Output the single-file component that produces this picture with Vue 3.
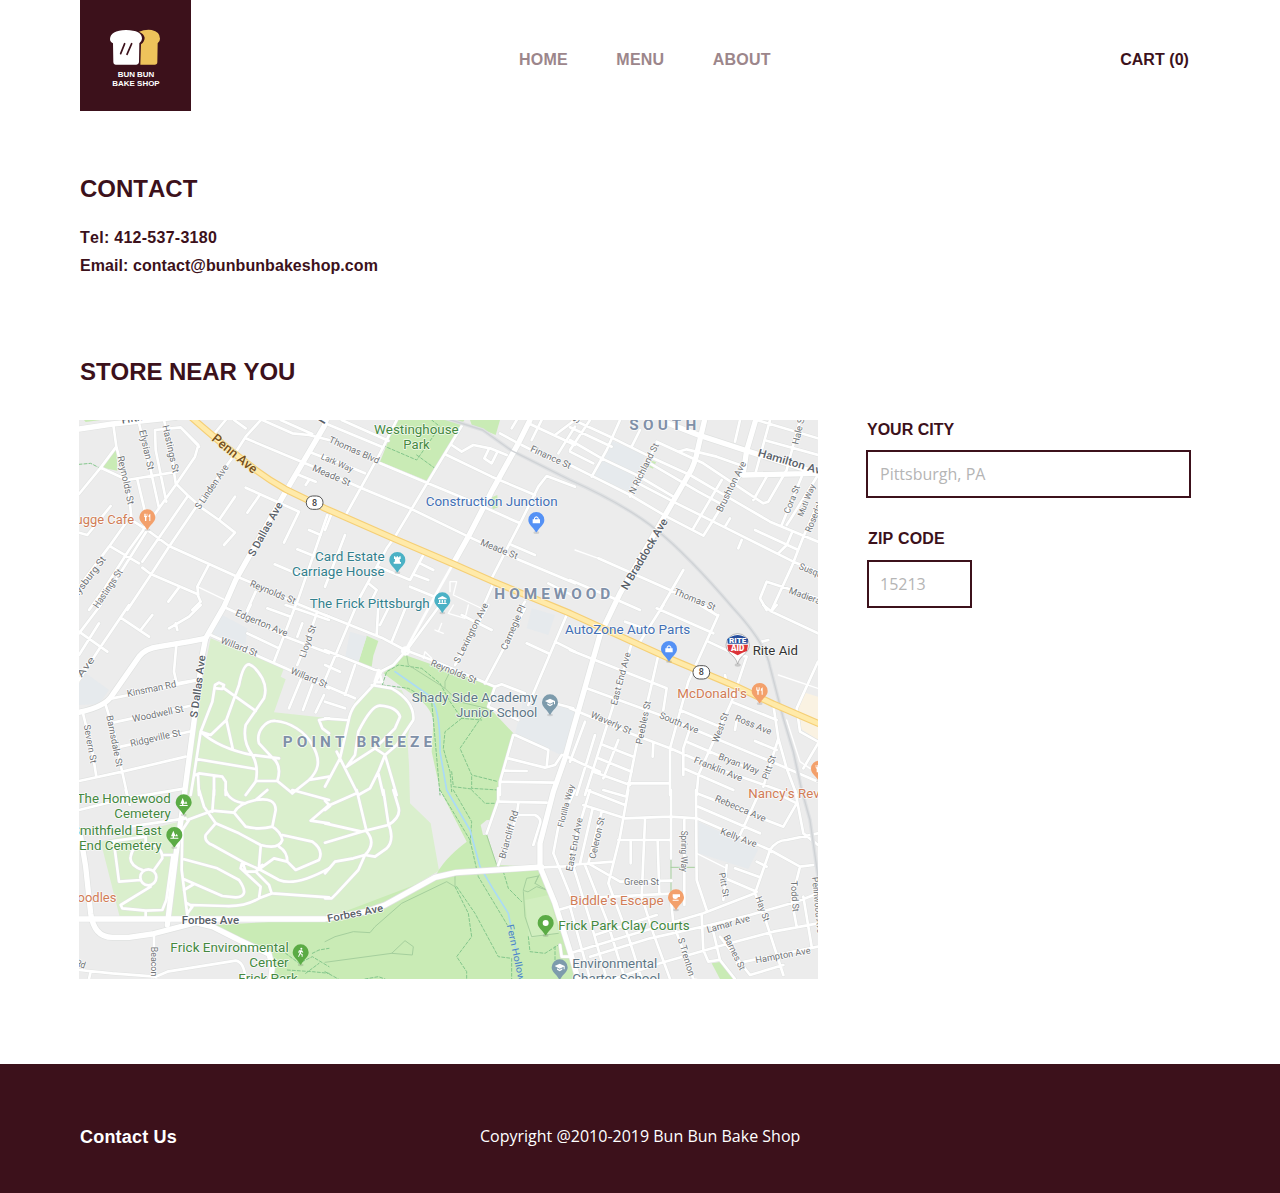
<script setup>
const nav = ['HOME', 'MENU', 'ABOUT']

// Map geometry is kept per tile; coordinates are local to the tile origin.
const tiles = [
  {
    x: 0, y: 0,
    park: 'M112 85 L115 152 L70 143Z M15 0 H65 L20 6Z',
    roads: 'M103 15 L112 80 L65 143 L0 222 M112 80 L150 225 L158 300 M65 143 L145 180 L295 155 M180 10 L215 150 L240 265 M175 178 L198 275 M255 0 L275 90 L290 190 L325 225 L370 265 L420 300 L468 338 L435 375 M262 245 L230 90 L228 30 L305 22 L358 75 L348 110 L290 195 L150 390 L80 500 L30 570 M305 22 L360 80 M440 0 L405 42 M465 0 L500 25 M550 -5 L500 50 L455 120 L345 270 L270 380 L215 465 L145 570 M325 230 L190 425 M468 230 L420 300 M165 305 L205 330 L270 378 L390 432 L475 470 L545 500 L640 545 L750 590 M205 330 L95 505 M95 380 L180 430 M95 258 L25 345 L0 338 M140 310 L90 380 L0 500 M190 443 L215 462 L355 522 L365 545 L340 570 M388 437 L355 500 L358 525 M300 502 L268 545 M500 55 L655 120 L750 160 M550 0 L640 40 L690 45 L750 60 M605 0 L700 42 M690 95 L740 115 M660 165 L710 185 M690 180 L680 195 M500 203 L660 275 L615 368 M542 225 L505 278 M745 285 L655 545 M690 330 L725 345 M655 388 L705 408 M587 433 L670 468 M530 515 L505 570',
    thin: 'M355 500 L435 538',
    trail: 'M0 133 L35 130 L60 143',
    streets: [
      ['Fifth Ave', 130, 11, 250, -10, 30, 1], ['Elysian St', 180, 32, 207, 152, 29], ['Hastings St', 250, 18, 282, 160, 29],
      ['Reynolds St', 115, 110, 147, 255, 29], ['S Linden Ave', 362, 270, 450, 142, 29], ['Gettysburg St', -32, 568, 82, 418, 29],
      ['Hastings St', 57, 566, 132, 456, 29], ['S Dallas Ave', 525, 412, 612, 254, 32, 1], ['Reynolds St', 511, 498, 645, 553, 29],
      ['Penn Ave', 396, 60, 522, 162, 39, 2], ['N', 735, 14, 750, -10, 32, 1],
    ],
  },
  {
    x: 738, y: 0,
    park: 'M215 0 H418 L385 60 L305 182 L165 125Z M435 0 H525 L512 45 L440 14Z M497 233 L517 225 L519 262 L503 268Z',
    roads: 'M0 10 L170 80 M50 0 L190 62 M215 0 L165 100 L65 280 M415 10 L330 150 L210 350 L185 385 L100 540 M165 130 L305 188 L430 240 L585 310 M365 105 L500 170 L630 225 M750 200 L665 168 L640 200 L585 310 L500 475 M0 155 L110 205 L255 265 L430 350 L560 410 L750 490 M0 110 L120 160 M380 75 L410 95 L445 75 L495 85 L545 105 M490 90 L478 115 L500 130 L515 100 M560 375 L630 405 M505 490 L470 570 M20 280 L0 330 M295 405 L255 480 L160 440 M285 430 L325 450 M270 465 L310 480 M255 500 L340 535 M130 490 L155 510 L140 540 M60 345 L0 500 M610 10 L750 75 M590 75 L700 130 M650 0 L620 60 M560 25 L575 0 M525 40 L580 70 M670 490 L750 530 M600 545 L585 570 M690 45 L750 0 M700 100 L750 20',
    thin: 'M375 515 V485 H395 L385 525 L480 570',
    trail: 'M320 0 L345 20 L275 120 L170 75 M275 105 L330 145',
    streets: [
      ['Thomas Blvd', 10, 66, 158, 132, 28], ['Lark Way', -14, 116, 80, 157, 26], ['Meade St', -40, 151, 72, 199, 28],
      ['Finance St', 614, 93, 733, 147, 28], ['Meade St', 464, 374, 574, 418, 28],
    ],
  },
  {
    x: 1473, y: 0,
    park: 'M245 122 L258 126 L249 146 L237 141Z',
    campus: 'M125 62 L225 105 L180 215 L70 170Z',
    roads: 'M0 135 L70 170 L180 225 L290 290 L400 347 L430 300 L515 160 M150 0 L110 90 L65 170 M0 -5 L130 55 L240 110 L360 165 L480 235 L600 305 L744 365 M0 60 L95 115 L200 165 L310 230 M0 95 L70 130 M60 0 L0 90 M210 30 L185 80 M0 22 L125 80 M260 65 L400 130 L580 250 L595 245 L650 150 L690 0 M325 95 L350 88 L440 110 L510 135 M180 230 L260 70 M240 130 L385 215 L450 250 M205 190 L320 250 L460 320 L670 425 L744 455 M455 180 L370 325 M480 295 L465 320 M515 360 L505 385 M555 165 L600 0 M590 170 L550 240 M510 0 L495 65 M560 0 L744 55 M590 62 L744 105 M695 170 L635 315 M744 165 L660 300 L650 315 M744 250 L700 350 L665 440 L605 570 M555 330 L680 388 M665 340 L650 375 L625 400 M85 415 L300 510 L430 570 M340 450 L270 570 M0 480 L130 535 L210 570 M590 570 L570 535 L590 485 L744 535',
    thin: 'M15 390 L85 415',
    streets: [
      ['N Richland St', 193, 224, 267, 75, 28], ['Brushton Ave', 455, 278, 529, 130, 29], ['Hale St', 685, 75, 706, -12, 28],
      ['Hamilton Ave', 562, 108, 768, 168, 33, 1], ['Cora St', 658, 283, 690, 200, 27], ['Muti Way', 698, 292, 736, 197, 25],
      ['Rosedale St', 722, 339, 775, 210, 28], ['N Braddock Ave', 171, 512, 294, 304, 33, 1], ['Susquehanna St', 685, 446, 860, 520, 28],
      ['Madiera St', 655, 519, 778, 564, 28], ['Thomas St', 310, 522, 432, 572, 28], ['St', 22, 12, 38, -15, 27],
    ],
  },
  {
    x: 0, y: 555,
    campus: 'M0 190 L90 255 L60 298 L0 300Z M420 25 L505 70 L500 120 L400 90Z',
    roads: 'M150 0 L65 125 L0 225 M65 0 L0 85 M60 55 L0 150 M0 80 L85 140 M125 38 L210 95 M220 30 L185 75 M365 0 L330 35 L270 70 M290 55 L295 75 M440 8 L500 35 L620 95 L750 145 M515 0 L500 30 M565 10 L635 35 M650 0 L585 170 M395 90 L530 150 L620 190 L750 250 M505 85 L600 130 M715 20 L680 120 L655 180 M670 55 L655 95 M665 225 L630 310 M700 240 L672 315 M735 270 L710 322 M620 0 L750 45 M292 120 L285 200 L293 235 L350 225 M100 280 L150 270 L360 225 M105 352 L345 300 M125 425 L340 378 M0 528 L130 500 L320 455 M80 300 L105 380 L125 480 L145 570 M12 325 L40 440 L52 515 M365 380 L400 290 L408 240 L420 233 L435 240 L430 252 L412 250 M435 250 L530 318 M365 380 Q420 430 520 450 L600 460 M365 380 L345 510 L335 570 M365 380 L395 390 L442 345 L462 435 M442 345 L480 240 Q492 178 510 178 Q530 185 550 220 Q565 250 555 280 L500 360 Q490 410 520 450 Q540 485 530 530 L500 570 M352 462 L530 492 M350 510 L360 505 L430 515 L440 530 V570 M405 515 V570 M357 510 L360 570 M580 458 L540 415 C530 380 560 345 590 348 C630 350 680 380 700 420 C730 470 715 500 690 525 L640 565 M580 458 Q610 480 595 528 H530 M595 528 L640 565 M690 525 L750 515 M750 340 L720 345 L730 370 L750 385',
    streets: [
      ['Edgerton Ave', 467, 31, 621, 95, 29], ['Willard St', 423, 113, 531, 155, 28], ['Willard St', 633, 205, 740, 249, 28],
      ['Lloyd St', 678, 160, 712, 64, 28], ['S Dallas Ave', 355, 340, 380, 152, 32, 1], ['Kinsman Rd', 146, 276, 293, 246, 29],
      ['Woodwell St', 162, 352, 315, 320, 29], ['Ridgeville St', 156, 425, 307, 392, 29], ['Barnsdale St', 82, 333, 113, 487, 28],
      ['Severn St', 14, 361, 35, 476, 28], ['Linden Ave', -72, 325, 48, 164, 28],
    ],
  },
  {
    x: 738, y: 555,
    park: 'M125 92 L160 108 L145 152 L140 185 L100 175Z',
    campus: 'M75 80 L125 95 L100 172 L60 158Z M600 265 L755 310 L712 452 L570 385Z M620 10 L690 30 L670 90 L605 70Z',
    roads: 'M0 30 L75 60 L170 98 L240 135 L320 165 L510 245 M240 140 L205 180 L170 198 L150 195 L0 135 M170 198 L150 235 L90 300 Q75 320 70 350 L45 460 L0 545 M140 240 L200 250 Q270 290 265 345 L215 420 L180 450 M65 485 L90 450 L100 380 Q140 300 165 302 Q215 305 225 335 L210 370 L150 430 L65 485 M150 430 L180 450 L215 570 M35 440 L100 570 M160 505 L175 570 M180 450 L160 500 L135 550 L100 570 M0 340 L65 345 M345 0 L242 140 M245 0 L200 110 M160 0 L155 90 M195 0 L165 60 M95 0 L0 225 M90 180 L60 270 M0 180 L45 200 M10 245 L90 280 M0 290 L60 310 M600 10 L480 235 M490 0 L390 180 M410 30 L500 75 M725 30 L610 300 M605 115 L670 145 M690 110 L750 140 M510 245 L530 238 L600 265 M510 245 L490 305 L580 345 M565 390 L525 530 V570 M570 390 L670 435 L665 485 M550 460 L660 488 L690 480 L710 450 M540 497 L605 498 M525 530 L690 533 M715 450 L750 465 M700 298 L745 310',
    thin: 'M385 0 L370 25 L420 40 L430 0 M350 55 L340 80 L330 75 M355 85 L330 75 M320 160 L300 140 L295 160',
    trail: 'M172 240 L185 200 L220 180 L290 190 L345 235 L375 290 L410 340 L470 345 M172 240 L250 250 L320 290 L330 400 L345 570 M410 340 L360 380 L355 430 L375 500 L380 560 M470 335 L405 430 L440 510 L520 530 M440 515 V550 L520 555 M380 500 L385 545 L440 552',
    path: 'M245 150 L250 180 L345 240 L360 250 L360 230 L375 200 M360 250 L400 290 L485 310',
    streets: [
      ['Reynolds St', 315, 181, 450, 236, 28], ['S Lexington Ave', 402, 176, 490, 0, 28], ['Carnegie Pl', 544, 137, 602, 5, 28],
    ],
  },
  {
    x: 1473, y: 555,
    food: 'M700 262 L744 275 V405 L690 370 L683 305Z',
    roads: 'M0 135 L75 165 L290 250 M50 250 L270 330 L400 385 L640 485 L744 530 M0 310 L180 385 L300 430 L440 490 L640 560 M185 115 L130 300 L45 570 M265 150 L240 260 L200 420 L170 570 M445 30 L355 230 L300 430 V570 M210 110 L280 0 M440 30 L390 0 M260 10 L430 85 M165 50 L250 80 M415 110 L500 150 L530 155 L485 290 L430 410 L385 510 L380 570 M290 250 L280 315 M485 290 L620 345 M330 315 L450 365 M360 370 L340 430 V510 M350 410 L560 500 M340 490 L490 555 M500 345 L495 375 M610 300 L625 400 L580 545 M625 400 L650 490 L680 570 M555 408 L620 435 M45 350 L0 470 M75 390 L20 570 M100 420 L190 455 M85 460 L185 500 M70 500 L180 540 M145 405 L100 520 M0 460 L90 500 M175 535 H300 M250 415 L248 455 M580 0 L605 20 L744 85 M605 18 L620 0 M465 210 L470 235 M575 110 L595 105 M744 170 L680 310 L690 380 L744 410 M744 415 L700 490',
    thin: 'M625 210 L744 250 M650 345 L690 470 L720 490',
    streets: [
      ['East End Ave', 140, 302, 182, 145, 28], ['Peebles St', 216, 419, 243, 290, 28], ['Waverly St', 60, 336, 179, 388, 28],
      ['South Ave', 266, 338, 381, 386, 28], ['West St', 444, 415, 476, 327, 28], ['Ross Ave', 493, 346, 600, 390, 28],
      ['Bryan Way', 443, 462, 563, 508, 28], ['Franklin Ave', 370, 472, 513, 530, 28], ['Pitt St', 593, 526, 618, 455, 28],
    ],
  },
  {
    x: 0, y: 1110,
    roads: 'M0 60 L140 25 L320 -5 M140 0 L152 45 M152 110 L320 85 M90 155 L200 140 V160 M105 160 L120 275 L185 270 M184 262 A24 24 0 1 0 232 262 A24 24 0 1 0 184 262 M190 240 Q150 225 155 200 Q160 165 200 160 Q250 165 250 205 L225 240 M250 195 L285 195 M215 290 L125 345 L130 355 L200 362 L250 360 L262 330 L280 200 M200 362 V385 M330 90 L310 120 L308 240 L325 375 M315 208 L415 235 L480 270 Q515 320 470 322 L430 318 L315 268 M345 282 L315 300 M325 340 L340 350 L325 370 M335 345 L440 348 Q500 350 540 325 L580 310 L750 322 M325 90 L400 62 L465 68 M405 0 L400 65 M360 0 L375 50 L410 100 L380 135 Q375 155 400 165 L490 215 L545 240 L600 270 Q650 290 750 235 M410 100 L480 130 L545 165 Q600 180 610 150 Q605 125 580 110 Q540 120 500 110 L465 68 Q480 40 530 30 Q590 20 590 60 L580 110 M440 0 Q450 35 500 40 M530 30 L565 0 M610 135 L700 155 Q735 180 720 210 L650 240 L625 215 L585 205 L530 245 M545 170 L540 230 M600 170 Q625 185 625 215 M490 215 L485 235 L545 290 L540 325 M500 245 H530 L550 225 M530 245 L570 285 L578 310 M490 215 L500 245 M640 0 L750 30 M750 45 L695 92 L750 100 M225 435 V560 M0 540 L100 550 L230 560 L265 545 L470 512 Q495 515 500 567 M35 545 L30 567',
    trail: 'M620 490 L660 520 L700 500 L750 530 M625 540 L700 545 L750 550 M700 490 L720 480 L750 475 M680 550 L720 520',
    streets: [
      ['Forbes Ave', 308, 402, 480, 402, 32, 1], ['Beacon St', 217, 470, 217, 590, 29], ['Reed Rd', -72, 505, 16, 536, 28],
    ],
  },
  {
    x: 738, y: 1110,
    roads: 'M95 0 L125 125 Q155 160 120 195 L85 205 L30 215 L0 250 M0 100 L110 125 L190 105 Q230 80 220 50 L205 0 M110 125 L0 158 M175 0 L190 100 Q210 150 185 175 L150 200 L120 195 L100 240 L35 310 L20 325 H0 M15 45 L95 10 M0 32 L15 48 L0 60 M520 -5 V30 L485 130 M525 35 L665 38 M580 40 L575 75 L630 75 Q650 85 645 100 L625 165 M575 80 L520 225 M650 232 L750 228 M750 0 L700 110 L685 190 L750 350 M700 360 L750 345 M705 465 L710 500 L740 500',
    trail: 'M345 0 L435 150 L460 260 L550 410 M385 0 L440 95 L435 160 M390 290 L430 370 L440 440 L395 500 L425 545 V567 M395 290 L450 370 L520 500 L560 505 V567 M535 245 L550 295 L590 335 M610 440 L615 485 L660 490 L700 465 M440 0 L480 40 L520 40 M690 470 V520 M120 567 L160 560 L180 567 M0 545 L40 567',
    path: 'M0 455 L30 440 L85 425 L135 428 L150 410 L230 340 L365 275 L390 290 V248 M0 517 L200 490 L240 452 L265 470 L262 495 L200 490 M485 135 L515 225 M595 305 L600 380 L620 440 L700 430 M595 300 L605 265 L640 258 L630 280 L665 300 L635 290 L610 305Z M630 280 L645 250',
    streets: [
      ['Forbes Ave', 9, 397, 176, 364, 32, 1], ['Briarcliff Rd', 540, 208, 580, 65, 28], ['Fern Hollow Creek', 545, 405, 600, 665, 29, 3],
      ['Flotilla Way', 714, 113, 748, -14, 25], ['East End Ave', 742, 245, 773, 85, 28],
    ],
  },
  {
    x: 1473, y: 1110,
    park: 'M425 520 L455 515 L495 567 H450Z',
    campus: 'M385 95 L565 178 L535 237 L385 190Z',
    roads: 'M60 0 L0 200 M40 45 L165 85 L300 80 L380 85 M50 0 L165 45 M100 0 L170 20 M175 0 L150 140 L115 280 L130 320 M68 55 L30 220 M0 225 L130 215 M95 65 L55 220 L150 275 L305 272 M145 150 H300 M182 155 V220 M225 90 L215 320 L250 430 L300 567 M263 155 L268 310 M303 0 V205 M343 90 V345 M80 322 L320 310 M45 225 L110 390 L165 567 M10 230 L60 390 L110 567 M0 350 L60 567 M130 320 L175 440 L215 567 M0 490 L180 435 L400 370 L555 310 M75 435 L260 375 M60 500 L240 445 L420 405 L540 375 L680 335 L744 310 M130 567 L270 520 L460 465 L610 425 L744 400 M303 330 L310 400 L370 567 M395 375 L400 480 L415 515 L445 510 M378 0 L380 270 L410 360 M425 405 L450 510 L495 567 M450 440 L540 555 L640 525 M555 310 L590 400 L640 555 M500 520 L744 470 M690 230 L665 330 L680 410 M700 320 L725 470 M380 85 L600 180 L690 230 L730 225 M555 310 L600 180 Q620 150 650 150 L744 130 M380 10 L640 110 L680 40 L640 20 M385 50 L570 130 M560 25 L510 135 M470 225 L460 330 M465 265 L560 305 M495 235 L570 262 M560 215 L590 230 M675 0 L700 130 L744 165',
    thin: 'M380 190 L470 235',
    path: 'M303 205 V320 M303 232 H378',
    streets: [
      ['Celeron St', 76, 208, 104, 84, 28], ['Spring Way', 334, 122, 334, 246, 26], ['Green St', 162, 285, 267, 285, 28],
      ['Rebecca Ave', 433, 32, 583, 96, 28], ['Kelly Ave', 449, 131, 556, 172, 28], ['Pitt St', 446, 250, 460, 322, 27],
      ['Lamar Ave', 413, 429, 542, 393, 28], ['Barnes St', 460, 440, 510, 543, 28], ['Hay St', 556, 323, 582, 396, 28],
      ['Todd St', 662, 273, 668, 366, 28], ['Pennwood Ave', 726, 262, 742, 430, 27], ['Hampton Ave', 558, 520, 723, 490, 28],
      ['S Trenton Ave', 323, 447, 372, 610, 28],
    ],
  },
]

const highways = [
  'M745 -10 L735 20 L620 215 L600 250 L470 480 L435 560 L380 655 L370 705 L345 905 L325 1055 L310 1170 L290 1310 L265 1515',
  'M380 655 L330 665 L240 680 Q200 685 180 710 L100 825 Q80 860 0 877',
  'M5 1250 L20 1340 L35 1480 Q45 1552 100 1552 L150 1552 L220 1542 L350 1508 L400 1520 L480 1560 L570 1602 L580 1640 L575 1677',
  'M0 1497 H738 L860 1475 L918 1455 L1068 1372 L1130 1358 L1388 1341',
  'M1878 -5 L1858 80 Q1848 135 1828 165 L1753 295 L1623 520 L1563 645 L1523 785 L1483 925 L1458 1015 L1423 1115 L1383 1270 V1340 L1428 1450 L1478 1610 L1498 1680',
  'M1353 0 L1318 70 L1243 205 L1168 350 L1123 430',
  'M1763 8 L1858 45 L2003 92 L2073 115 L2217 160 M2030 0 L2003 92 L1992 165 L2217 160',
  'M0 27 L100 12 L290 -8',
]

const penn = 'M335 -10 Q430 75 530 150 Q570 180 620 208 L738 265 L943 355 L1123 432 L1243 485 L1473 580 L1770 715 L1973 800 L2083 852 L2217 910'
const rail = 'M1078 -12 L1211 30 L1298 92 L1473 180 Q1640 255 1733 330 T1963 565 Q2060 670 2073 740 L2113 895 L2143 995 L2168 1110 L2193 1200 L2217 1370'

const districts = [
  ['SOUTH', 1651, 29, 1852], ['HOMEWOOD', 1246, 537, 1594], ['POINT BREEZE', 611, 981, 1059],
]

const places = [
  ['Mugge Cafe', -44, 313, 165, 'food'], ['Westinghouse', 885, 41, 1139, 'green'], ['Park', 973, 87, 1052, 'green'],
  ['Construction Junction', 1040, 257, 1436, 'shop'], ['Card Estate', 708, 422, 917, 'museum'], ['Carriage House', 639, 467, 917, 'museum'],
  ['The Frick Pittsburgh', 692, 563, 1052, 'museum'], ['AutoZone Auto Parts', 1458, 643, 1834, 'shop'], ['Rite Aid', 2021, 705, 2157, 'plain'],
  ["McDonald's", 1795, 835, 2004, 'food'], ['Shady Side Academy', 998, 846, 1375, 'school'], ['Junior School', 1131, 891, 1375, 'school'],
  ["Nancy's Revival", 2008, 1134, 2282, 'food'], ['The Homewood', -7, 1148, 275, 'green'], ['Cemetery', 106, 1193, 275, 'green'],
  ['Smithfield East', -22, 1246, 248, 'green'], ['End Cemetery', 0, 1291, 248, 'green'], ['Noodles', -32, 1446, 112, 'food'],
  ['Frick Environmental', 274, 1596, 629, 'green'], ['Center', 511, 1641, 629, 'green'], ['Frick Park', 478, 1690, 656, 'green'],
  ["Biddle's Escape", 1473, 1454, 1754, 'food'], ['Frick Park Clay Courts', 1438, 1530, 1832, 'green'],
  ['Environmental', 1480, 1643, 1735, 'school'], ['Charter School', 1480, 1688, 1744, 'school'],
]

const pins = [
  [205, 292, '#f3a06b', 'fork'], [1372, 300, '#5491f5', 'bag'], [955, 420, '#4bb1c5', 'tower'], [1090, 541, '#4bb1c5', 'museum'],
  [1770, 687, '#5491f5', 'bag'], [2042, 813, '#f3a06b', 'fork'], [1413, 847, '#7d9bac', 'cap'], [2220, 1046, '#f3a06b', 'fork'],
  [314, 1147, '#5bab45', 'tree'], [286, 1245, '#5bab45', 'tree'], [1791, 1432, '#f3a06b', 'cup'], [1400, 1509, '#5bab45', 'dot'],
  [665, 1597, '#5bab45', 'hiker'], [1442, 1642, '#7d9bac', 'cap'],
]

const glyphs = {
  fork: 'M-10 -11 V-4 Q-10 0 -7 0 V11 H-3 V0 Q0 0 0 -4 V-11 H-2 V-4 H-4 V-11 H-6 V-4 H-8 V-11Z M9 -11 Q3 -9 3 -1 H6 V11 H9Z',
  bag: 'M-11 -2 H11 V10 H-11Z M-7 -2 V-6 Q0 -16 7 -6 V-2 H4 V-5 Q0 -10 -4 -5 V-2Z',
  tower: 'M-10 -11 H-6 V-8 H-2 V-11 H2 V-8 H6 V-11 H10 V-3 H7 L8 6 H11 V11 H-11 V6 H-8 L-7 -3 H-10Z',
  museum: 'M0 -13 L13 -6 V-3 H-13 V-6Z M-10 -1 H-6 V7 H-10Z M-2 -1 H2 V7 H-2Z M6 -1 H10 V7 H6Z M-13 8 H13 V11 H-13Z',
  cap: 'M0 -11 L15 -4 V6 H12 V-2 L0 4 L-15 -4Z M-8 3 L0 7 L8 3 V7 L0 12 L-8 7Z',
  tree: 'M-3 -13 L4 4 H-1 V8 H-5 V4 H-10Z M7 -4 L11 4 H3Z M-12 8 H12 V11 H-12Z',
  cup: 'M-10 -9 H12 V-1 H6 Q5 5 -2 5 Q-10 5 -10 -1Z M-10 7 H8 V10 H-10Z',
  dot: 'M-9 0 A9 9 0 1 0 9 0 A9 9 0 1 0 -9 0',
  hiker: 'M-1 -11 A3 3 0 1 0 5 -11 A3 3 0 1 0 -1 -11 M-5 -6 H4 L8 0 L6 1 L2 -2 L1 3 L6 6 V13 H3 V8 L-1 5 L-5 13 H-8 L-4 4 L-3 -3 L-6 1 H-8Z',
}

const kinds = ['street', 'avenue', 'penn', 'creek']

function place([, x1, y1, x2, y2]) {
  return `translate(${x1} ${y1}) rotate(${(Math.atan2(y2 - y1, x2 - x1) * 180) / Math.PI})`
}

function span([, x1, y1, x2, y2]) {
  return Math.hypot(x2 - x1, y2 - y1)
}
</script>

<template>
  <div class="page">
    <header class="header">
      <a class="logo">
        <svg viewBox="30 0 333 333" width="111" height="111">
          <path fill="#eec35b" d="M207 95 Q224 88 245 90 Q270 95 270 116 Q270 125 263 130 L262 186 Q262 194 254 194 H211 L213 133 Q224 124 224 113 Q222 101 207 95Z" />
          <path fill="#fff" d="M120 117 Q121 92 168 90 Q216 91 216 116 Q215 125 208 130 L207 187 Q206 194 199 194 H137 Q130 194 130 187 L129 130 Q120 126 120 117Z" />
          <path stroke="#3c111b" stroke-width="5" stroke-linecap="round" d="M164 131 L152 161 M185 131 L171 163" />
          <text x="143" y="231" textLength="110" lengthAdjust="spacingAndGlyphs">BUN BUN</text>
          <text x="127" y="258" textLength="142" lengthAdjust="spacingAndGlyphs">BAKE SHOP</text>
        </svg>
      </a>
      <nav class="nav">
        <a v-for="item in nav" :key="item">{{ item }}</a>
      </nav>
      <a class="cart">CART (0)</a>
    </header>

    <main class="main">
      <section class="contact">
        <h1>CONTACT</h1>
        <p class="tel">Tel: 412-537-3180</p>
        <p class="email">Email: contact@bunbunbakeshop.com</p>
      </section>

      <h1 class="near">STORE NEAR YOU</h1>
      <section class="stores">
        <svg class="map" viewBox="0 0 2217 1677" width="739" height="559">
          <rect width="2217" height="1677" fill="#ececec" />
          <path fill="#daefcd" d="M395 655 L615 745 L605 770 L620 778 L585 877 L738 893 L803 900 L828 845 L888 795 L968 810 L1003 885 L985 955 L990 1035 L993 1150 L1055 1210 L1080 1352 L918 1450 L750 1495 L122 1490 L65 1265 L300 1205 L345 905Z" />
          <path fill="#c9ebb5" d="M978 705 L1248 800 L1228 860 L1308 945 L1263 1085 V1140 L1223 1240 L1253 1335 L1388 1341 L1428 1450 L1498 1677 H580 L570 1602 L400 1515 L738 1497 L1068 1372 Q1090 1320 1163 1265 L1083 1110 L1058 995 L1063 905 Q1058 855 988 815 L913 760Z" />
          <path fill="#ececec" d="M1223 1200 L1205 1215 L1212 1245 L1225 1245 L1240 1200Z" />
          <path fill="#d1eebf" d="M1338 1440 L1410 1425 L1440 1540 L1350 1555Z" />
          <g v-for="(t, i) in tiles" :key="'a' + i" :transform="`translate(${t.x} ${t.y})`">
            <path :d="t.park" fill="#c9ebb5" />
            <path :d="t.campus" fill="#e6eaed" />
            <path :d="t.food" fill="#faf2e2" />
          </g>
          <g class="line">
            <g v-for="(t, i) in tiles" :key="'t' + i" :transform="`translate(${t.x} ${t.y})`">
              <path :d="t.trail" class="trail" />
              <path :d="t.path" class="path" />
            </g>
            <path class="stream" d="M948 755 L1048 825 Q1085 860 1083 995 L1103 1110 L1173 1230 L1203 1340 L1238 1400 L1288 1480 L1298 1530 L1328 1677" />
            <g v-for="(t, i) in tiles" :key="'c' + i" :transform="`translate(${t.x} ${t.y})`">
              <path :d="t.roads" class="casing" />
            </g>
            <path v-for="d in highways" :key="'hc' + d" :d="d" class="big-casing" />
            <g v-for="(t, i) in tiles" :key="'r' + i" :transform="`translate(${t.x} ${t.y})`">
              <path :d="t.roads" class="road" />
              <path :d="t.thin" class="thin" />
            </g>
            <path d="M1123 430 L1078 510 L983 685" class="road" />
            <path d="M899 750 l-12 36 h22z M970 693 a10 10 0 1 0 20 0 a10 10 0 1 0 -20 0" class="road" />
            <path :d="rail" class="rail-glow" />
            <path v-for="d in highways" :key="d" :d="d" class="big" />
            <path :d="rail" class="rail" />
            <path :d="penn" class="penn-casing" />
            <path :d="penn" class="penn-road" />
          </g>

          <g v-for="(t, i) in tiles" :key="'l' + i" :transform="`translate(${t.x} ${t.y})`">
            <text
              v-for="(s, j) in t.streets" :key="j" :class="kinds[s[6] || 0]" :transform="place(s)"
              :font-size="s[5]" :textLength="span(s)" lengthAdjust="spacingAndGlyphs"
            >{{ s[0] }}</text>
          </g>
          <text v-for="d in districts" :key="d[0]" class="district" :x="d[1]" :y="d[2]" :textLength="d[3] - d[1]">{{ d[0] }}</text>

          <g v-for="[x, y] in [[707, 248], [1867, 757]]" :key="x" :transform="`translate(${x} ${y})`">
            <rect x="-25" y="-20" width="50" height="40" rx="19" fill="#fff" stroke="#555" stroke-width="3" />
            <text class="route" y="9">8</text>
          </g>

          <g v-for="(p, i) in pins" :key="'p' + i" :transform="`translate(${p[0]} ${p[1]})`">
            <ellipse cy="38" rx="9" ry="4" fill="#000" opacity=".12" />
            <path :fill="p[2]" d="M0 -24 A24 24 0 0 1 24 0 C24 15 10 20 1 37 H-1 C-10 20 -24 15 -24 0 A24 24 0 0 1 0 -24Z" />
            <path :d="glyphs[p[3]]" fill="#fff" />
          </g>

          <g transform="translate(1976 675)">
            <ellipse cy="60" rx="9" ry="5" fill="#000" opacity=".15" />
            <path fill="#fff" stroke="#999" stroke-width="2" d="M0 -34 A35 35 0 0 1 35 0 C34 27 8 27 0 57 C-8 27 -34 27 -35 0 A35 35 0 0 1 0 -34Z" />
            <path fill="#264d9b" d="M-30 -4 L-31 -18 L-20 -25 Q0 -35 20 -25 L31 -18 L30 -4Z" />
            <path fill="#dc3439" d="M-31 -1 H31 L28 18 Q15 22 0 31 Q-15 22 -28 18Z" />
            <text class="rite" x="-26" y="-7" font-size="22" textLength="52" lengthAdjust="spacingAndGlyphs">RITE</text>
            <text class="rite" x="-20" y="19" font-size="25" textLength="40" lengthAdjust="spacingAndGlyphs">AID</text>
          </g>

          <text
            v-for="p in places" :key="p[0]" class="poi" :class="p[4]" :x="p[1]" :y="p[2]"
            :textLength="p[3] - p[1]" lengthAdjust="spacingAndGlyphs"
          >{{ p[0] }}</text>
        </svg>

        <form class="finder">
          <label for="city">YOUR CITY</label>
          <input id="city" class="city" placeholder="Pittsburgh, PA" />
          <label for="zip" class="zip-label">ZIP CODE</label>
          <input id="zip" class="zip" placeholder="15213" />
        </form>
      </section>
    </main>

    <footer class="footer">
      <a class="contact-us">Contact Us</a>
      <p>Copyright @2010-2019 Bun Bun Bake Shop</p>
    </footer>
  </div>
</template>

<style>
body {
  margin: 0;
  background: #fff;
}
</style>

<style scoped>
.page {
  display: flex;
  flex-direction: column;
  height: 1193px;
  color: #3c111b;
  font: bold 16px/20px "Arial Rounded MT Bold", "Liberation Sans", Arial, sans-serif;
  font-kerning: none;
}
h1, p { margin: 0; }
h1 { font-size: 24px; line-height: 30px; }

.header {
  display: grid;
  grid-template-columns: 439px 1fr auto;
  height: 111px;
  padding: 0 91px 0 80px;
}
.logo { width: 111px; height: 111px; background: #3c111b; }
.logo svg { display: block; }
.logo text { font: bold 23px "Liberation Sans", Arial, sans-serif; fill: #fff; }
.nav { display: flex; gap: 48.3px; padding-top: 50px; color: #9c868b; letter-spacing: .25px; }
.cart { padding-top: 50px; letter-spacing: .05px; }

.main { flex: 1; }
.contact { padding: 63px 0 0 80px; }
.tel { margin-top: 24px; letter-spacing: .27px; }
.email { margin-top: 8px; letter-spacing: .07px; }
.near { margin: 81px 0 0 80px; letter-spacing: -.05px; }
.stores { display: flex; padding: 33px 0 0 79px; }
.map { flex: none; display: block; overflow: hidden; }

.finder { display: flex; flex-direction: column; align-items: flex-start; padding-left: 48px; }
.finder label { margin-left: 1px; line-height: 20px; }
.finder .zip-label { margin: 31px 0 0 2px; letter-spacing: .15px; }
.finder input {
  box-sizing: border-box;
  height: 48px;
  margin-top: 10px;
  padding: 0 12px;
  border: 2px solid #3c111b;
  border-radius: 0;
  background: #fff;
  font: 400 16px "Open Sans", sans-serif;
}
.finder input::placeholder { color: #b5b5b5; opacity: 1; }
.finder .city { width: 325px; }
.finder .zip { width: 105px; margin: 11px 0 0 1px; padding-left: 11px; }

.footer {
  display: flex;
  height: 129px;
  padding-left: 80px;
  background: #3c111b;
  color: #fff;
}
.contact-us { width: 400px; padding-top: 63px; font-size: 18px; letter-spacing: .2px; }
.footer p { padding-top: 62px; font: 400 16px/20px "Open Sans", sans-serif; }

.line path { fill: none; stroke-linecap: round; stroke-linejoin: round; }
.line .casing { stroke: #e0e2e1; stroke-width: 11; }
.line .road { stroke: #fff; stroke-width: 8; }
.line .thin { stroke: #fff; stroke-width: 4; }
.line .big-casing { stroke: #e0e2e1; stroke-width: 20; }
.line .big { stroke: #fff; stroke-width: 16; }
.line .trail { stroke: #83c68b; stroke-width: 3; stroke-dasharray: 9 6; }
.line .path { stroke: #a5cf9d; stroke-width: 3; }
.line .stream { stroke: #aadaf7; stroke-width: 5; }
.line .rail-glow { stroke: #dfe1e3; stroke-width: 11; }
.line .rail { stroke: #cfd2d5; stroke-width: 4; }
.line .penn-casing { stroke: #f5cf76; stroke-width: 21; }
.line .penn-road { stroke: #ffeaa9; stroke-width: 14; }

.map text {
  font-family: Roboto, sans-serif;
  font-weight: 400;
  paint-order: stroke;
  stroke: #fff;
  stroke-opacity: .75;
  stroke-width: 5px;
  stroke-linejoin: round;
}
.map .street { fill: #717477; }
.map .avenue { fill: #596068; font-weight: 500; }
.map .penn { fill: #76501c; font-weight: 500; stroke: #fff1c0; }
.map .creek { fill: #4a83c9; stroke: #c9ebb5; }
.map .district { fill: #8090a8; font-size: 46px; font-weight: 700; }
.map .poi { font-size: 41px; }
.map .food { fill: #d17c55; }
.map .green { fill: #44883f; }
.map .shop { fill: #4270b5; }
.map .museum { fill: #32808d; }
.map .school { fill: #5e7686; }
.map .plain { fill: #333; }
.map .route { font-size: 27px; font-weight: 500; fill: #444; stroke: none; text-anchor: middle; }
.map .rite { font-weight: 900; fill: #fff; stroke: none; }
</style>
